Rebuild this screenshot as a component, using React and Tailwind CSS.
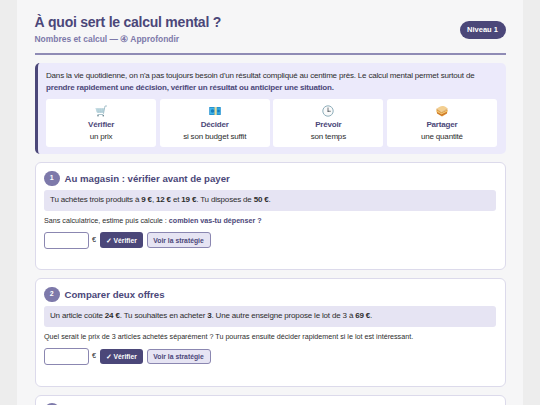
import { useState } from 'react';

function CartIcon() {
  return (
    <svg viewBox="0 0 24 24" className="h-3 w-3">
      <path d="M1 7h18l-2 9H4z" fill="#c3dbe3" />
      <path d="M1 7h18M2 10h16M3 13h14M6 7l1 9M10.500 7v9M15 7l-1 9" fill="none" stroke="#a5c5d0" strokeWidth="0.800" />
      <path d="M24 2h-4l-3 15-1 2H5" fill="none" stroke="#8fb0bc" strokeWidth="1.500" />
      <circle cx="6" cy="21.500" r="1.600" fill="#5d7985" />
      <circle cx="16.500" cy="21.500" r="1.600" fill="#5d7985" />
    </svg>
  );
}

function EuroNoteIcon() {
  return (
    <svg viewBox="0 0 24 24" className="h-3 w-3">
      <rect x="0.500" y="4" width="23" height="16" fill="#2593d1" />
      <rect x="2" y="6" width="8" height="12" fill="#42b5e8" />
      <rect x="16.500" y="6" width="6" height="12" fill="#36a8df" />
      <rect x="11" y="4" width="4.500" height="16" fill="#e3dc9b" />
      <circle cx="7" cy="12" r="3.500" fill="#167dbd" />
      <circle cx="19" cy="12" r="2.500" fill="#167dbd" />
    </svg>
  );
}

function ClockIcon() {
  return (
    <svg viewBox="0 0 24 24" className="h-3 w-3">
      <circle cx="12" cy="12" r="10.400" fill="#fafafa" stroke="#8fafbb" strokeWidth="2" />
      <path d="M12 5v7.500h5.500" fill="none" stroke="#424a50" strokeWidth="1.500" />
      <circle cx="12" cy="12.500" r="1.200" fill="#424a50" />
    </svg>
  );
}

function SandwichIcon() {
  return (
    <svg viewBox="0 0 24 24" className="h-3 w-3">
      <path d="M1 8l10 7 12-6-1 8-10 6-10-6z" fill="#d99032" />
      <path d="M1 10l10 6 12-6v3l-12 6-10-5z" fill="#f2c26b" />
      <path d="M2 15l9 5 11-5" fill="none" stroke="#c76a28" strokeWidth="1.500" />
      <path d="M1 8c2-3 8-6 12-6s10 3 10 6l-12 7z" fill="#f3cf91" />
      <path d="M1 8l10 7 12-7" fill="none" stroke="#c8873c" strokeWidth="1" />
    </svg>
  );
}

const goals = [
  { Icon: CartIcon, title: 'Vérifier', text: 'un prix' },
  { Icon: EuroNoteIcon, title: 'Décider', text: 'si son budget suffit' },
  { Icon: ClockIcon, title: 'Prévoir', text: 'son temps' },
  { Icon: SandwichIcon, title: 'Partager', text: 'une quantité' },
];

function Exercise({ number, title, statement, children }) {
  const [answer, setAnswer] = useState('');
  return (
    <section className="mb-2 h-[108.300px] rounded-[6px] border border-[#dcdaeb] bg-white px-[8.500px] pt-[7.500px]">
      <div className="flex items-center gap-[5px]">
        <span className="flex h-[15.500px] w-[15.500px] items-center justify-center rounded-full bg-[#7d79aa] text-[7px] font-bold text-white">{number}</span>
        <h2 className="text-[9.650px] leading-[15px] font-bold whitespace-nowrap text-[#4b4779]">{title}</h2>
      </div>
      <p className="mt-1 h-[20.500px] rounded-[3px] bg-[#e6e4f3] px-[6px] text-[8px] leading-[20.500px] tracking-[-0.175px] whitespace-nowrap">{statement}</p>
      <p className="mt-[5.500px] text-[7.180px] leading-[11px] whitespace-nowrap">{children}</p>
      <div className="mt-[4.500px] flex items-center">
        <input
          value={answer}
          onChange={(e) => setAnswer(e.target.value)}
          className="h-[17px] w-[44.500px] rounded-[3px] border border-[#8b87b1] bg-white px-1 text-[7px]"
        />
        <span className="ml-[3.500px] w-[7.500px] text-[7.300px]">€</span>
        <button className="h-[15.500px] w-[43.500px] rounded-[3px] bg-[#4b4779] text-[6.750px] leading-[15px] font-bold whitespace-nowrap text-white">✓ Vérifier</button>
        <button className="ml-[3.500px] h-[15.500px] w-[64px] rounded-[3px] border border-[#8b87b1] bg-[#e6e4f3] text-[6.800px] leading-[13px] font-bold whitespace-nowrap text-[#4b4779]">Voir la stratégie</button>
      </div>
    </section>
  );
}

export default function App() {
  return (
    <div className="h-[405px] overflow-hidden bg-[#ededed] font-['Liberation_Sans',Arial,sans-serif] text-[#2d2d2d]">
      <main className="mx-[17px] h-[520px] bg-[#f6f6f7] px-[17.500px] pt-[12.500px]">
        <header className="flex h-[42px] items-start justify-between border-b-2 border-[#8f8bb5]">
          <div>
            <h1 className="text-[14px] leading-[18px] font-bold tracking-[-0.240px] whitespace-nowrap text-[#4b4779]">À quoi sert le calcul mental ?</h1>
            <p className="mt-[3.500px] text-[8.450px] leading-[11px] font-bold whitespace-nowrap text-[#7d79aa]">
              Nombres et calcul — <span className="text-[9px] leading-[8px]">④</span> Approfondir
            </p>
          </div>
          <span className="mt-[8px] flex h-[18.500px] w-[46px] items-center justify-center rounded-full bg-[#4b4779] text-[7.500px] font-bold whitespace-nowrap text-white">Niveau 1</span>
        </header>

        <section className="mt-[8.500px] mb-[8.500px] h-[90.500px] rounded-[5px] border-l-[3px] border-[#4b4779] bg-[#eceafb] pt-[7px] pr-[8.500px] pl-[8.500px]">
          <p className="text-[8px] leading-[11.500px] tracking-[-0.180px] whitespace-nowrap">
            Dans la vie quotidienne, on n'a pas toujours besoin d'un résultat compliqué au centime près. Le calcul mental permet surtout de
            <br />
            <strong className="text-[#4b4779]">prendre rapidement une décision, vérifier un résultat ou anticiper une situation.</strong>
          </p>
          <div className="mt-[6px] grid grid-cols-4 gap-[3.500px]">
            {goals.map(({ Icon, title, text }) => (
              <div key={title} className="flex h-[47.500px] flex-col items-center rounded-[3px] bg-white pt-[5.500px] text-[8px] leading-[11.500px] tracking-[-0.175px] whitespace-nowrap">
                <Icon />
                <strong className="mt-[2.500px] text-[#4b4779]">{title}</strong>
                <span>{text}</span>
              </div>
            ))}
          </div>
        </section>

        <Exercise
          number={1}
          title="Au magasin : vérifier avant de payer"
          statement={<>Tu achètes trois produits à <b>9 €</b>, <b>12 €</b> et <b>19 €</b>. Tu disposes de <b>50 €</b>.</>}
        >
          Sans calculatrice, estime puis calcule : <b className="text-[#4b4779]">combien vas-tu dépenser ?</b>
        </Exercise>
        <Exercise
          number={2}
          title="Comparer deux offres"
          statement={<>Un article coûte <b>24 €</b>. Tu souhaites en acheter <b>3</b>. Une autre enseigne propose le lot de 3 à <b>69 €</b>.</>}
        >
          Quel serait le prix de 3 articles achetés séparément ? Tu pourras ensuite décider rapidement si le lot est intéressant.
        </Exercise>
        {/* only the top of the next card is in view */}
        <section className="h-[108px] rounded-[6px] border border-[#dcdaeb] bg-white px-[8.500px] pt-[7.500px]">
          <div className="h-[15.500px] w-[15.500px] rounded-full bg-[#7d79aa]" />
        </section>
      </main>
    </div>
  );
}
